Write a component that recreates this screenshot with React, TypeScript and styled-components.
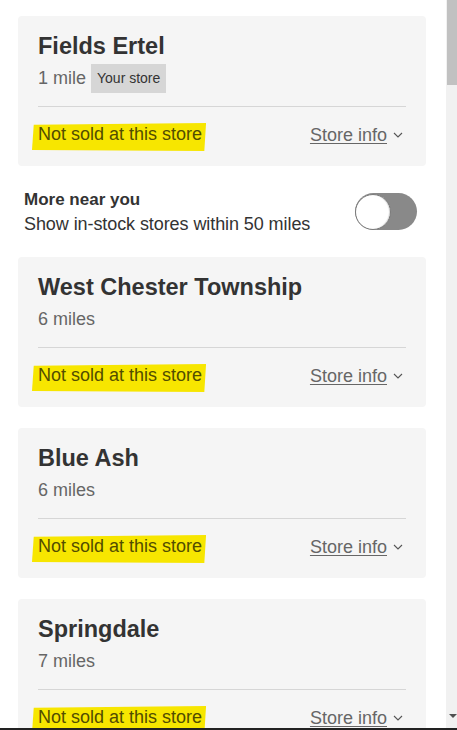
import React from "react";
import styled, { createGlobalStyle } from "styled-components";

const GlobalStyle = createGlobalStyle`
  html, body {
    margin: 0;
    padding: 0;
    background: #fff;
  }
  body {
    font-family: "Liberation Sans", Arial, sans-serif;
    color: #333;
  }
`;

const Screen = styled.div`
  display: grid;
  grid-template-columns: 1fr 11px;
  grid-template-rows: 1fr 2px;
  width: 457px;
  height: 730px;
  overflow: hidden;
`;

const Content = styled.div`
  display: flex;
  flex-direction: column;
  gap: 21px;
  padding: 16px 20px 0 18px;
  overflow: hidden;
  min-height: 0;
`;

const Card = styled.section`
  flex-shrink: 0;
  background: #f5f5f5;
  border-radius: 4px;
  padding: 16px 20px 15px;
`;

const StoreName = styled.h2`
  margin: 0;
  font-size: 23.5px;
  line-height: 28px;
  font-weight: 700;
  color: #333;
`;

const Meta = styled.div`
  display: flex;
  align-items: center;
  gap: 5px;
  height: 29px;
  margin-top: 4px;
  font-size: 18px;
  line-height: 29px;
  color: #666;
`;

const Badge = styled.span`
  display: inline-block;
  padding: 0 6px;
  background: #d6d6d6;
  color: #333;
  font-size: 14px;
  line-height: 29px;
`;

const Divider = styled.hr`
  margin: 13px 0 16px;
  border: 0;
  border-top: 1px solid #d6d6d6;
`;

const Footer = styled.div`
  display: flex;
  align-items: flex-start;
  justify-content: space-between;
  height: 28px;
`;

const Highlight = styled.mark`
  display: inline-block;
  margin-left: -6px;
  padding: 0 4px 6px 6px;
  background: #f7e600;
  color: #524d00;
  font-size: 18px;
  line-height: 22px;
  clip-path: polygon(1% 6%, 100% 0, 99% 100%, 0 96%);
`;

const InfoLink = styled.a`
  display: flex;
  align-items: center;
  gap: 6px;
  margin-right: 3px;
  color: #666;
  font-size: 18px;
  line-height: 24px;
  cursor: pointer;

  span {
    text-decoration: underline;
    text-underline-offset: 2px;
  }
`;

const Nearby = styled.div`
  display: flex;
  align-items: center;
  justify-content: space-between;
  flex-shrink: 0;
  height: 49px;
  padding: 0 9px 0 6px;
`;

const NearbyText = styled.div`
  display: flex;
  flex-direction: column;
`;

const NearbyTitle = styled.strong`
  font-size: 17px;
  line-height: 24px;
  font-weight: 700;
  color: #333;
`;

const NearbyNote = styled.span`
  font-size: 18px;
  line-height: 24px;
  letter-spacing: -0.08px;
  color: #333;
`;

const Toggle = styled.button<{ $on?: boolean }>`
  display: flex;
  align-items: center;
  justify-content: ${(p) => (p.$on ? "flex-end" : "flex-start")};
  width: 62px;
  height: 37px;
  padding: 0;
  border: 0;
  border-radius: 19px;
  background: #898989;
  cursor: pointer;

  &::before {
    content: "";
    width: 34px;
    height: 34px;
    border-radius: 50%;
    background: #fff;
    border: 1px solid #7a7a7a;
    box-shadow: inset -1px 0 1px rgba(0, 0, 0, 0.15);
  }
`;

const Scrollbar = styled.div`
  display: flex;
  flex-direction: column;
  justify-content: space-between;
  align-items: flex-end;
  background: #f1f1f1;
  padding-bottom: 10px;
`;

const Thumb = styled.div`
  width: 10px;
  height: 85px;
  background: #c1c1c1;
`;

const ArrowDown = styled.div`
  width: 0;
  height: 0;
  border-left: 4px solid transparent;
  border-right: 4px solid transparent;
  border-top: 4px solid #505050;
`;

const BottomEdge = styled.div`
  grid-column: 1 / -1;
  background: #222;
`;

const Chevron = () => (
  <svg width="10" height="6" viewBox="0 0 10 6" fill="none">
    <polyline points="1,1 5,5 9,1" stroke="#555" strokeWidth="1.1" />
  </svg>
);

type Store = { name: string; distance: string; mine?: boolean };

const stores: Store[] = [
  { name: "Fields Ertel", distance: "1 mile", mine: true },
  { name: "West Chester Township", distance: "6 miles" },
  { name: "Blue Ash", distance: "6 miles" },
  { name: "Springdale", distance: "7 miles" },
];

const StoreCard = ({ store }: { store: Store }) => (
  <Card>
    <StoreName>{store.name}</StoreName>
    <Meta>
      {store.distance}
      {store.mine && <Badge>Your store</Badge>}
    </Meta>
    <Divider />
    <Footer>
      <Highlight>Not sold at this store</Highlight>
      <InfoLink>
        <span>Store info</span>
        <Chevron />
      </InfoLink>
    </Footer>
  </Card>
);

const App = () => {
  const [first, ...rest] = stores;
  return (
    <>
      <GlobalStyle />
      <Screen>
        <Content>
          <StoreCard store={first} />
          <Nearby>
            <NearbyText>
              <NearbyTitle>More near you</NearbyTitle>
              <NearbyNote>Show in-stock stores within 50 miles</NearbyNote>
            </NearbyText>
            <Toggle type="button" aria-label="Show more stores" />
          </Nearby>
          {rest.map((store) => (
            <StoreCard key={store.name} store={store} />
          ))}
        </Content>
        <Scrollbar>
          <Thumb />
          <ArrowDown />
        </Scrollbar>
        <BottomEdge />
      </Screen>
    </>
  );
};

export default App;
